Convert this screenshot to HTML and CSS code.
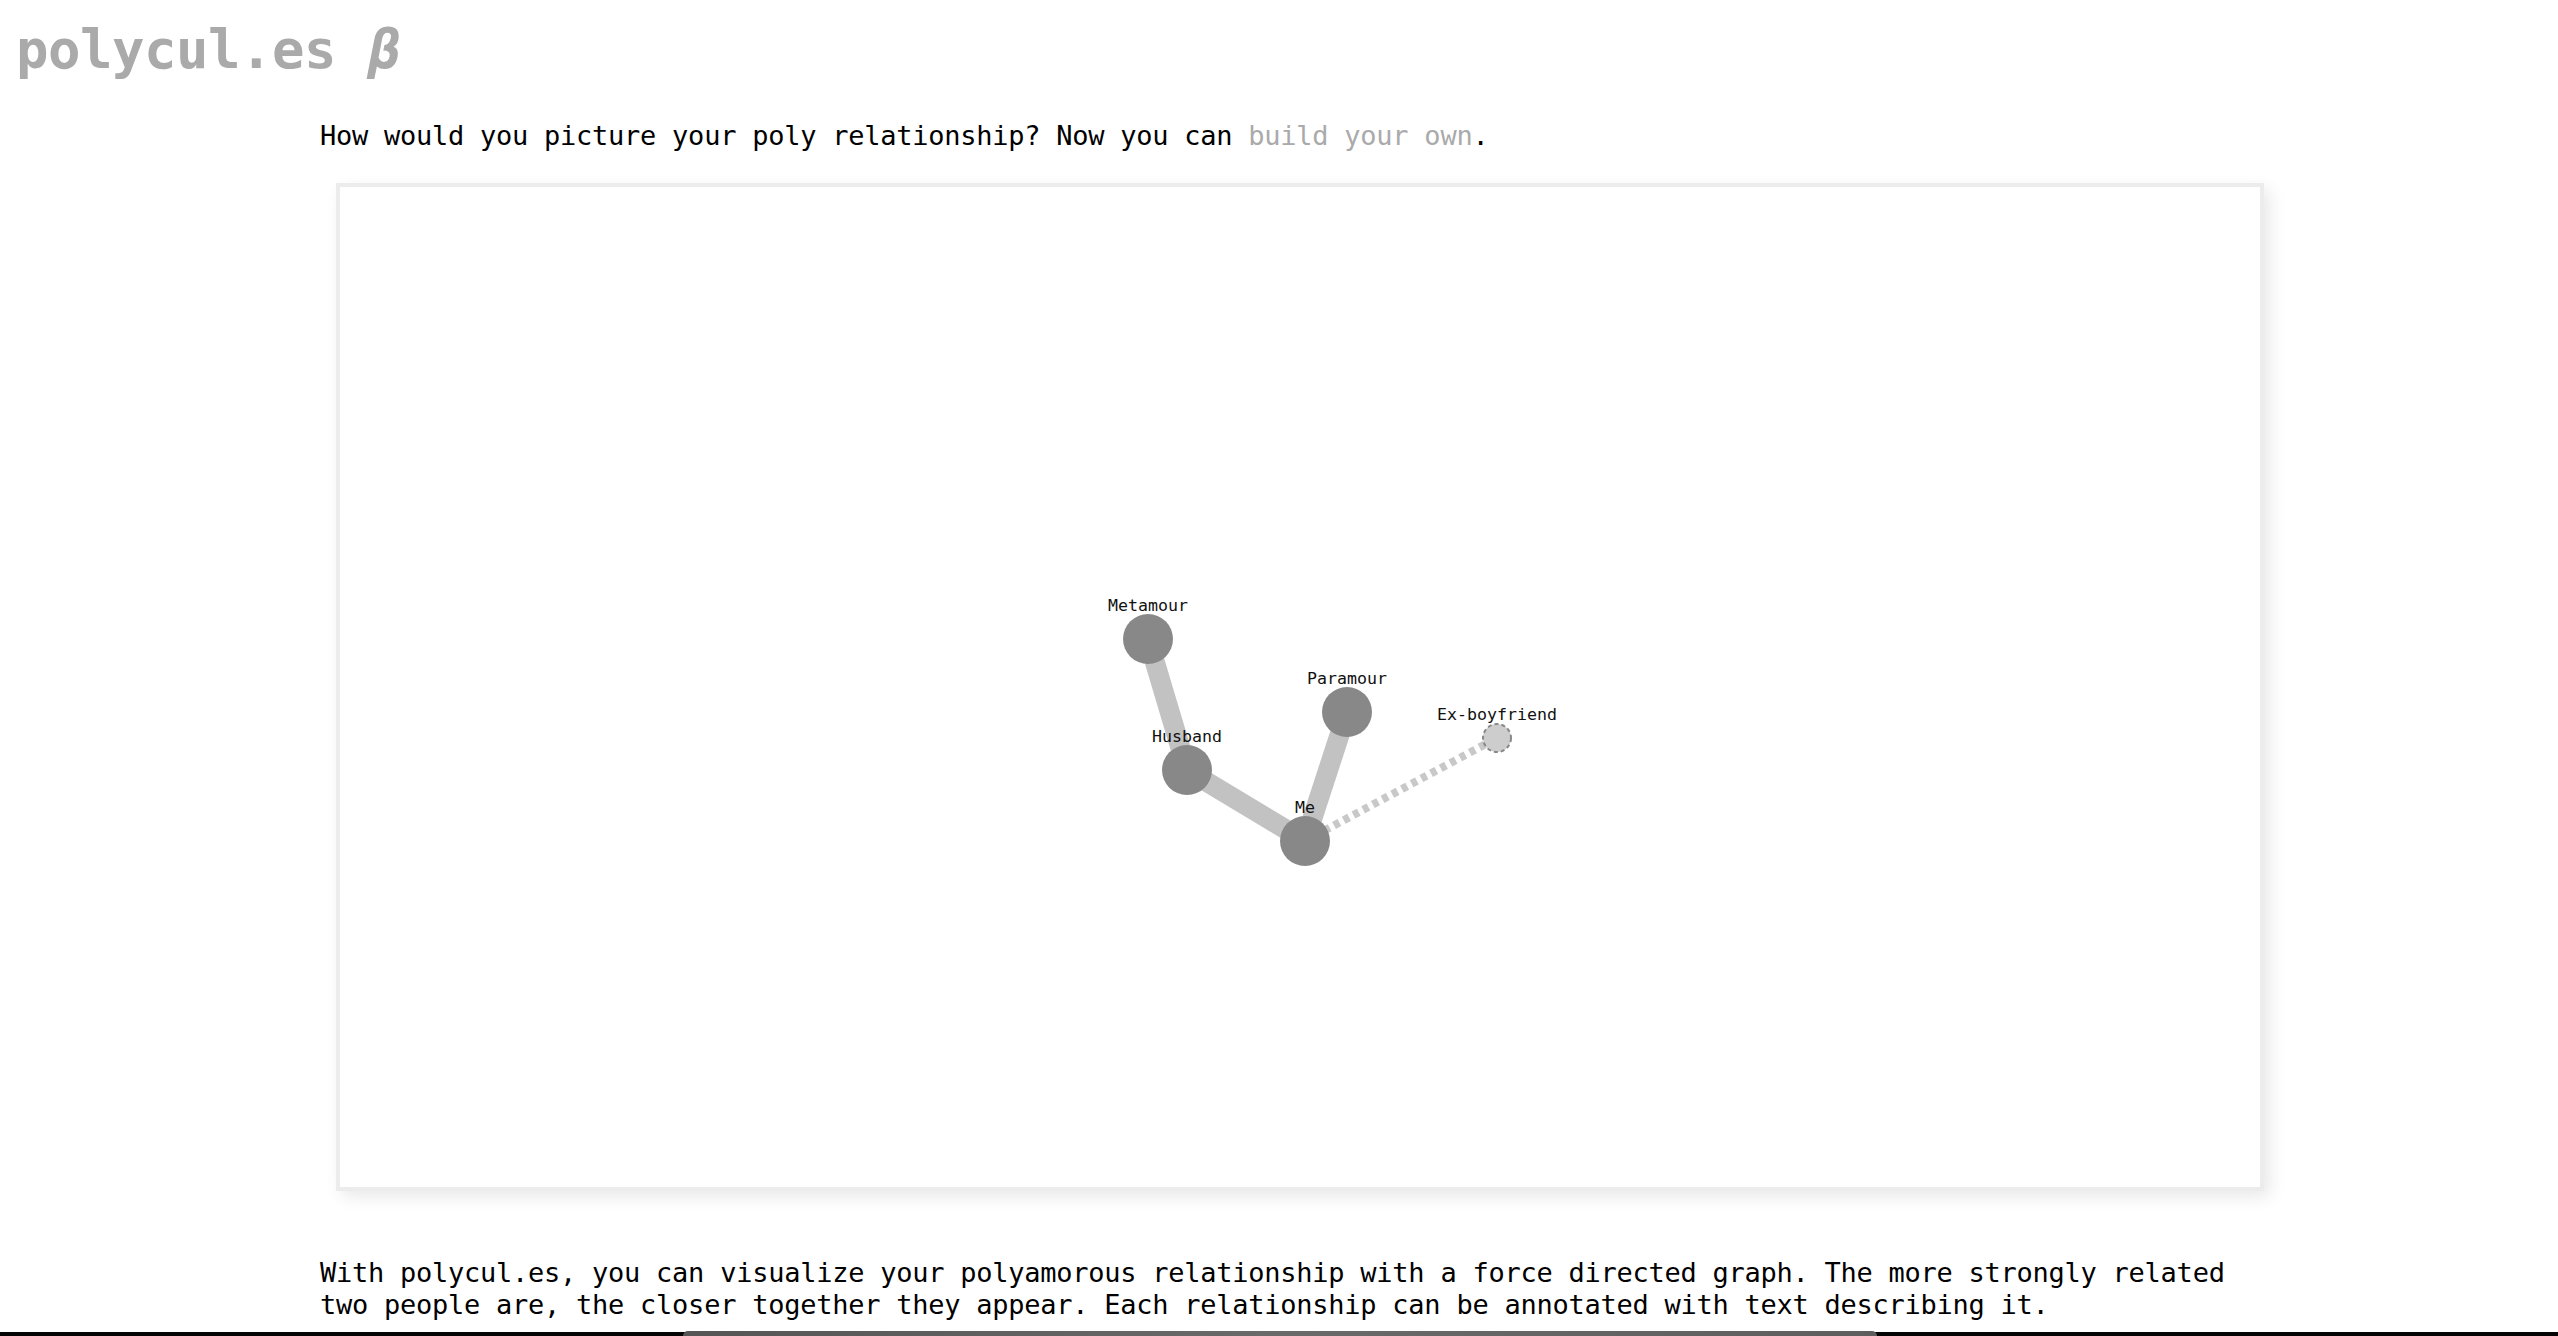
FILE: index.html
```html
<!DOCTYPE html>
<html lang="en">
<head>
<meta charset="utf-8">
<title>polycul.es</title>
<link rel="stylesheet" href="styles.css">
</head>
<body>
<h1 class="title">polycul.es <span class="beta">β</span></h1>
<main class="content">
  <p class="intro">How would you picture your poly relationship? Now you can <a class="link" href="#">build your own</a>.</p>
  <div class="graph-box">
    <svg class="graph" width="1920" height="1000" viewBox="0 0 1920 1000">
      <g class="links">
        <line class="edge" x1="808" y1="452" x2="847" y2="583"/>
        <line class="edge" x1="847" y1="583" x2="965" y2="654"/>
        <line class="edge" x1="1007" y1="525" x2="965" y2="654"/>
        <line class="edge edge-ex" x1="965" y1="654" x2="1157" y2="551"/>
      </g>
      <g class="nodes">
        <circle class="node" cx="808" cy="452" r="25"/>
        <circle class="node" cx="847" cy="583" r="25"/>
        <circle class="node" cx="1007" cy="525" r="25"/>
        <circle class="node" cx="965" cy="654" r="25"/>
        <circle class="node node-ex" cx="1157" cy="551" r="14"/>
      </g>
      <g class="labels">
        <text class="label" x="808" y="424">Metamour</text>
        <text class="label" x="847" y="555">Husband</text>
        <text class="label" x="1007" y="497">Paramour</text>
        <text class="label" x="965" y="626">Me</text>
        <text class="label" x="1157" y="533">Ex-boyfriend</text>
      </g>
    </svg>
  </div>
  <p class="about">With polycul.es, you can visualize your polyamorous relationship with a force directed graph. The more strongly related two people are, the closer together they appear. Each relationship can be annotated with text describing it.</p>
</main>
<div class="fade"><div class="fade-clear"></div></div>
<div class="dock"><div class="dock-tab"></div></div>
</body>
</html>
```
FILE: styles.css
```css
html, body {
  margin: 0;
  padding: 0;
  background: #fff;
}
body {
  font-family: "DejaVu Sans Mono", "Liberation Mono", monospace;
  color: #000;
  overflow: hidden;
  height: 1336px;
}
.title {
  margin: 0;
  padding: 19px 0 0 16px;
  font-size: 54px;
  letter-spacing: -0.5px;
  font-weight: bold;
  color: #aaa;
  line-height: 62px;
}
.beta {
  font-style: italic;
}
.content {
  padding: 0 320px;
}
.intro {
  margin: 39px 0 0 0;
  font-size: 27px;
  letter-spacing: -0.25px;
  line-height: 31.4px;
}
.link {
  color: #aaa;
  text-decoration: none;
}
.graph-box {
  margin: 32px 0 0 16px;
  width: 1920px;
  height: 1000px;
  border: 4px solid #ececec;
  background: #fff;
  box-shadow: 6px 6px 16px rgba(0, 0, 0, 0.09);
}
.graph {
  display: block;
}
.edge {
  stroke: #c2c2c2;
  stroke-width: 20;
}
.edge-ex {
  stroke: #c8c8c8;
  stroke-width: 8;
  stroke-dasharray: 6 5;
}
.node {
  fill: #888;
}
.node-ex {
  fill: #cdcdcd;
  stroke: #888;
  stroke-width: 2;
  stroke-dasharray: 4 3;
}
.label {
  font-family: "DejaVu Sans Mono", monospace;
  font-size: 16.6px;
  fill: #111;
  text-anchor: middle;
}
.about {
  margin: 66px 0 0 0;
  font-size: 27px;
  letter-spacing: -0.25px;
  line-height: 31.4px;
}
.fade {
  position: fixed;
  left: 0;
  right: 0;
  bottom: 4px;
  height: 80px;
  z-index: -1;
  background: linear-gradient(to bottom, rgba(0, 0, 0, 0), rgba(0, 0, 0, 0.07));
  overflow: hidden;
}
.fade-clear {
  position: absolute;
  left: 700px;
  width: 1160px;
  top: 30px;
  height: 80px;
  background: #fff;
  box-shadow: 0 0 40px 30px #fff;
}
.dock {
  position: fixed;
  left: 0;
  right: 0;
  bottom: 0;
  height: 4px;
  background: #050505;
}
.dock-tab {
  position: absolute;
  left: 683px;
  width: 1194px;
  top: -1px;
  height: 5px;
  border-radius: 8px 8px 0 0;
  background: linear-gradient(to right, #555, #6a6a6a 50%, #5e5e5e);
}
```
